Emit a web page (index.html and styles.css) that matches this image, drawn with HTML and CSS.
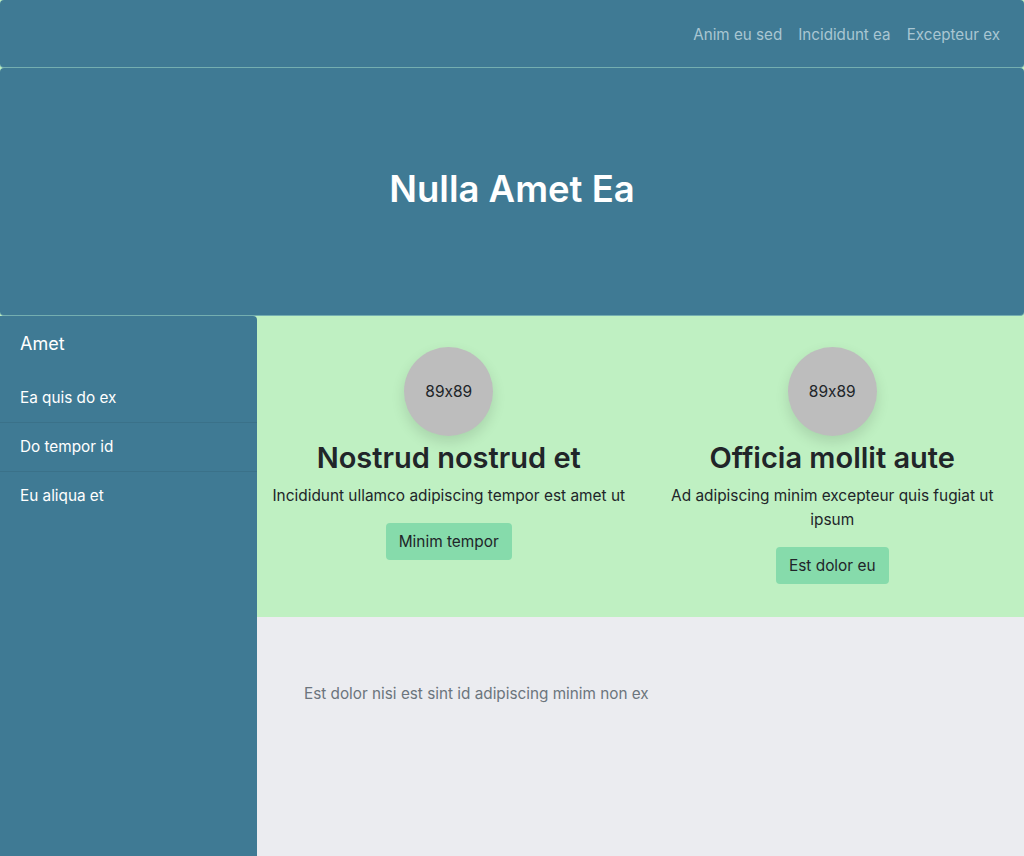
FILE: index.html
```html
<!DOCTYPE html>
<html>
<head>
<meta charset="utf-8">
<link rel="stylesheet" href="styles.css">
</head>
<body>
<header class="topbar">
  <nav class="nav">
    <a href="#">Anim eu sed</a>
    <a href="#">Incididunt ea</a>
    <a href="#">Excepteur ex</a>
  </nav>
</header>
<section class="hero">
  <h1>Nulla Amet Ea</h1>
</section>
<div class="main">
  <aside class="sidebar">
    <div class="side-title">Amet</div>
    <ul class="side-list">
      <li>Ea quis do ex</li>
      <li>Do tempor id</li>
      <li>Eu aliqua et</li>
    </ul>
  </aside>
  <div class="content">
    <section class="features">
      <div class="feature">
        <div class="avatar">89x89</div>
        <h2>Nostrud nostrud et</h2>
        <p>Incididunt ullamco adipiscing tempor est amet ut</p>
        <a class="btn" href="#">Minim tempor</a>
      </div>
      <div class="feature">
        <div class="avatar">89x89</div>
        <h2>Officia mollit aute</h2>
        <p>Ad adipiscing minim excepteur quis fugiat ut ipsum</p>
        <a class="btn" href="#">Est dolor eu</a>
      </div>
    </section>
    <section class="note">
      <p>Est dolor nisi est sint id adipiscing minim non ex</p>
    </section>
  </div>
</div>
</body>
</html>
```
FILE: styles.css
```css
* { box-sizing: border-box; }
html, body {
  margin: 0;
  padding: 0;
  height: 100%;
}
body {
  font-family: Inter, "Noto Sans", sans-serif;
  font-feature-settings: "calt" 0;
  font-size: 15.3px;
  line-height: 1.5;
  color: #212529;
  background: #bff0c2;
  display: flex;
  flex-direction: column;
}
.topbar {
  background: #3f7a94;
  height: 68px;
  border-radius: 4px;
  border-bottom: 1px solid #74aeb0;
  display: flex;
  align-items: center;
  justify-content: flex-end;
  padding: 3px 24px 0 0;
}
.nav {
  display: flex;
  gap: 16px;
}
.nav a {
  color: #a9c6d2;
  text-decoration: none;
  font-size: 15.2px;
}
.hero {
  background: #3f7a94;
  height: 248px;
  border-radius: 4px;
  border-bottom: 1px solid #74aeb0;
  display: flex;
  align-items: center;
  justify-content: center;
  padding-bottom: 4px;
}
.hero h1 {
  margin: 0;
  color: #fff;
  font-size: 36.5px;
  font-weight: 600;
  line-height: 1.2;
}
.main {
  flex: 1;
  display: flex;
}
.sidebar {
  width: 257px;
  flex: none;
  background: #3f7a94;
  border-radius: 0 4px 0 0;
  color: #fff;
}
.side-title {
  font-size: 18px;
  padding: 16px 20px;
  line-height: 24px;
  margin-bottom: 2px;
}
.side-list {
  list-style: none;
  margin: 0;
  padding: 0;
}
.side-list li {
  font-size: 15.3px;
  padding: 12px 20px;
  line-height: 24px;
  border-bottom: 1px solid #3a7189;
}
.side-list li:last-child { border-bottom: none; }
.content {
  flex: 1;
  display: flex;
  flex-direction: column;
}
.features {
  background: #bff0c2;
  display: grid;
  grid-template-columns: 1fr 1fr;
  padding: 31px 0 33px;
}
.feature {
  display: flex;
  flex-direction: column;
  align-items: center;
  text-align: center;
  padding: 0 12px;
}
.avatar {
  width: 89px;
  height: 89px;
  border-radius: 50%;
  background: #bdbdbd;
  display: flex;
  align-items: center;
  justify-content: center;
  font-size: 15.5px;
  box-shadow: 0 6px 14px rgba(0,0,0,0.12);
}
.feature h2 {
  margin: 5px 0 8px;
  font-size: 29px;
  font-weight: 600;
  line-height: 1.2;
}
.feature p {
  margin: 0 0 15px;
  font-size: 15.4px;
  line-height: 24px;
}
.btn {
  display: inline-block;
  background: #86dbab;
  color: #212529;
  text-decoration: none;
  padding: 6px 13px;
  border-radius: 4px;
  font-size: 15.4px;
  line-height: 25px;
  height: 37px;
}
.note {
  flex: 1;
  background: #ebecf0;
  padding: 66px 47px;
}
.note p {
  margin: 0;
  color: #6c757d;
  font-size: 15.3px;
}
```
